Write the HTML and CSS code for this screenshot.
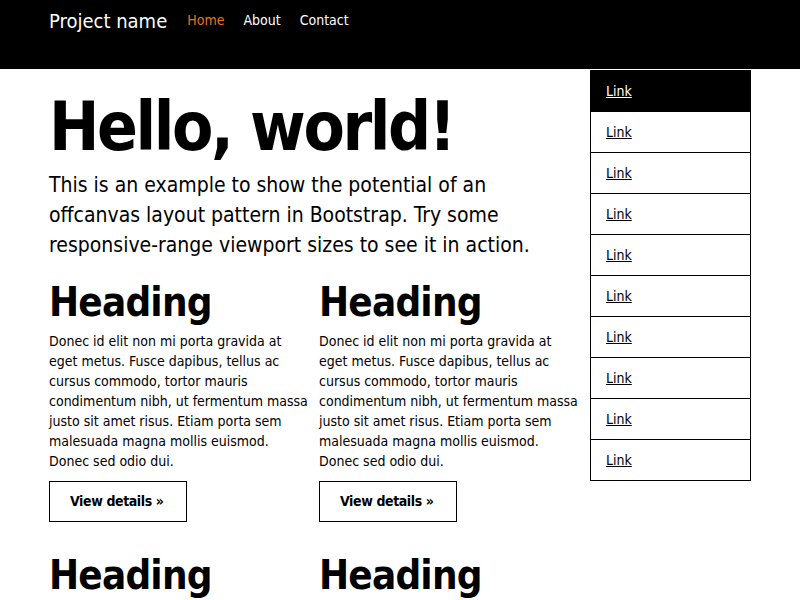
FILE: index.html
```html
<!DOCTYPE html>
<html lang="en">
<head>
<meta charset="utf-8">
<title>Off Canvas Template</title>
<link rel="stylesheet" href="styles.css">
</head>
<body>
<nav class="navbar">
  <a class="brand" href="#">Project name</a>
  <ul class="nav">
    <li><a class="active" href="#">Home</a></li>
    <li><a href="#">About</a></li>
    <li><a href="#">Contact</a></li>
  </ul>
</nav>
<div class="page">
  <main class="main">
    <div class="jumbotron">
      <h1>Hello, world!</h1>
      <p class="lead">This is an example to show the potential of an offcanvas layout pattern in Bootstrap. Try some responsive-range viewport sizes to see it in action.</p>
    </div>
    <div class="grid">
      <div class="card">
        <h2>Heading</h2>
        <p>Donec id elit non mi porta gravida at eget metus. Fusce dapibus, tellus ac cursus commodo, tortor mauris condimentum nibh, ut fermentum massa justo sit amet risus. Etiam porta sem malesuada magna mollis euismod. Donec sed odio dui.</p>
        <a class="btn" href="#">View details &raquo;</a>
      </div>
      <div class="card">
        <h2>Heading</h2>
        <p>Donec id elit non mi porta gravida at eget metus. Fusce dapibus, tellus ac cursus commodo, tortor mauris condimentum nibh, ut fermentum massa justo sit amet risus. Etiam porta sem malesuada magna mollis euismod. Donec sed odio dui.</p>
        <a class="btn" href="#">View details &raquo;</a>
      </div>
      <div class="card">
        <h2>Heading</h2>
        <p>Donec id elit non mi porta gravida at eget metus. Fusce dapibus, tellus ac cursus commodo, tortor mauris condimentum nibh, ut fermentum massa justo sit amet risus. Etiam porta sem malesuada magna mollis euismod. Donec sed odio dui.</p>
        <a class="btn" href="#">View details &raquo;</a>
      </div>
      <div class="card">
        <h2>Heading</h2>
        <p>Donec id elit non mi porta gravida at eget metus. Fusce dapibus, tellus ac cursus commodo, tortor mauris condimentum nibh, ut fermentum massa justo sit amet risus. Etiam porta sem malesuada magna mollis euismod. Donec sed odio dui.</p>
        <a class="btn" href="#">View details &raquo;</a>
      </div>
    </div>
  </main>
  <aside class="sidebar">
    <a class="item active" href="#">Link</a>
    <a class="item" href="#">Link</a>
    <a class="item" href="#">Link</a>
    <a class="item" href="#">Link</a>
    <a class="item" href="#">Link</a>
    <a class="item" href="#">Link</a>
    <a class="item" href="#">Link</a>
    <a class="item" href="#">Link</a>
    <a class="item" href="#">Link</a>
    <a class="item" href="#">Link</a>
  </aside>
</div>
</body>
</html>
```
FILE: styles.css
```css
* { box-sizing: border-box; }
body {
  margin: 0;
  font-family: "DejaVu Sans Condensed", "DejaVu Sans", sans-serif;
  font-size: 14px;
  line-height: 20px;
  color: #000;
  background: #fff;
}
.navbar {
  background: #000;
  height: 69px;
  display: flex;
  align-items: flex-start;
  padding-left: 49px;
}
.brand {
  color: #fff;
  text-decoration: none;
  font-size: 20px;
  line-height: 24px;
  padding-top: 9px;
}
.nav {
  list-style: none;
  margin: 0 0 0 20px;
  padding: 0;
  display: flex;
  gap: 19px;
}
.nav a {
  color: #fff;
  text-decoration: none;
  font-size: 14px;
  line-height: 20px;
  display: block;
  padding-top: 10px;
}
.nav a.active { color: #e8731a; }
.page {
  display: flex;
  align-items: flex-start;
  padding-left: 49px;
}
.main {
  width: 526px;
  padding-top: 22px;
}
.jumbotron h1 {
  font-size: 67px;
  line-height: 72px;
  font-weight: bold;
  letter-spacing: -2.4px;
  margin: 0;
}
.lead {
  font-size: 21px;
  line-height: 30px;
  margin: 7px 0 0;
}
.grid {
  display: grid;
  grid-template-columns: 270px 256px;
  row-gap: 31px;
  margin-top: 20px;
}
.card h2 {
  font-size: 40px;
  line-height: 44px;
  font-weight: bold;
  letter-spacing: -0.8px;
  margin: 0;
}
.card p {
  width: 262px;
  margin: 7px 0 10px;
}
.btn {
  display: inline-block;
  border: 1px solid #000;
  color: #000;
  text-decoration: none;
  font-weight: bold;
  white-space: nowrap;
  letter-spacing: -0.4px;
  padding: 9px 0 9px 20px;
  height: 41px;
  width: 138px;
}
.sidebar {
  width: 161px;
  margin-left: 15px;
  margin-top: 1px;
  border: 1px solid #000;
  display: flex;
  flex-direction: column;
}
.item {
  display: block;
  padding: 10px 15px;
  line-height: 20px;
  color: #000;
  text-decoration: underline;
  border-top: 1px solid #000;
}
.item:first-child { border-top: 0; }
.item.active {
  background: #000;
  color: #fff;
}
```
